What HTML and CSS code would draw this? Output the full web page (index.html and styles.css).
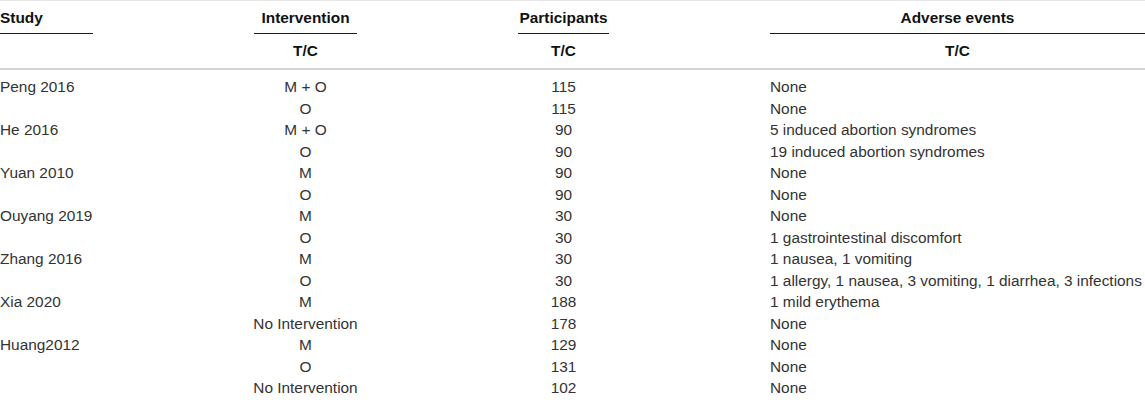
FILE: index.html
```html
<!DOCTYPE html>
<html>
<head>
<meta charset="utf-8">
<link rel="stylesheet" href="styles.css">
</head>
<body>
<div class="table">
  <div class="head">
    <div class="h1 left">Study</div>
    <div class="h1">Intervention</div>
    <div class="h1">Participants</div>
    <div class="h1">Adverse events</div>
    <div class="h2"></div>
    <div class="h2">T/C</div>
    <div class="h2">T/C</div>
    <div class="h2">T/C</div>
  </div>
  <div class="body">
    <div class="c">Peng 2016</div><div class="c mid">M + O</div><div class="c mid">115</div><div class="c">None</div>
    <div class="c"></div><div class="c mid">O</div><div class="c mid">115</div><div class="c">None</div>
    <div class="c">He 2016</div><div class="c mid">M + O</div><div class="c mid">90</div><div class="c">5 induced abortion syndromes</div>
    <div class="c"></div><div class="c mid">O</div><div class="c mid">90</div><div class="c">19 induced abortion syndromes</div>
    <div class="c">Yuan 2010</div><div class="c mid">M</div><div class="c mid">90</div><div class="c">None</div>
    <div class="c"></div><div class="c mid">O</div><div class="c mid">90</div><div class="c">None</div>
    <div class="c">Ouyang 2019</div><div class="c mid">M</div><div class="c mid">30</div><div class="c">None</div>
    <div class="c"></div><div class="c mid">O</div><div class="c mid">30</div><div class="c">1 gastrointestinal discomfort</div>
    <div class="c">Zhang 2016</div><div class="c mid">M</div><div class="c mid">30</div><div class="c">1 nausea, 1 vomiting</div>
    <div class="c"></div><div class="c mid">O</div><div class="c mid">30</div><div class="c">1 allergy, 1 nausea, 3 vomiting, 1 diarrhea, 3 infections</div>
    <div class="c">Xia 2020</div><div class="c mid">M</div><div class="c mid">188</div><div class="c">1 mild erythema</div>
    <div class="c"></div><div class="c mid">No Intervention</div><div class="c mid">178</div><div class="c">None</div>
    <div class="c">Huang2012</div><div class="c mid">M</div><div class="c mid">129</div><div class="c">None</div>
    <div class="c"></div><div class="c mid">O</div><div class="c mid">131</div><div class="c">None</div>
    <div class="c"></div><div class="c mid">No Intervention</div><div class="c mid">102</div><div class="c">None</div>
  </div>
</div>
</body>
</html>
```

FILE: styles.css
```css
html, body {
  margin: 0;
  padding: 0;
  background: #fff;
}
body {
  font-family: "Liberation Sans", Arial, sans-serif;
  font-size: 15.4px;
  color: #333;
}
.table {
  width: 1145px;
  border-top: 1px solid #e6e6e6;
  border-bottom: 1px solid #e6e6e6;
}
.head, .body {
  display: grid;
  grid-template-columns: 93px 103px 91px 375px;
  column-gap: 161px;
}
.head {
  border-bottom: 2px solid #d4d4d4;
}
.h1 {
  font-weight: bold;
  color: #111;
  text-align: center;
  height: 32px;
  line-height: 34px;
  border-bottom: 1px solid #1a1a1a;
}
.h1.left {
  text-align: left;
}
.h2 {
  font-weight: bold;
  color: #111;
  text-align: center;
  height: 34px;
  line-height: 34px;
}
.body {
  padding-top: 6px;
  padding-bottom: 9px;
}
.c {
  height: 21.5px;
  line-height: 21.5px;
  white-space: nowrap;
}
.c.mid {
  text-align: center;
  margin: 0 -30px;
}
```
